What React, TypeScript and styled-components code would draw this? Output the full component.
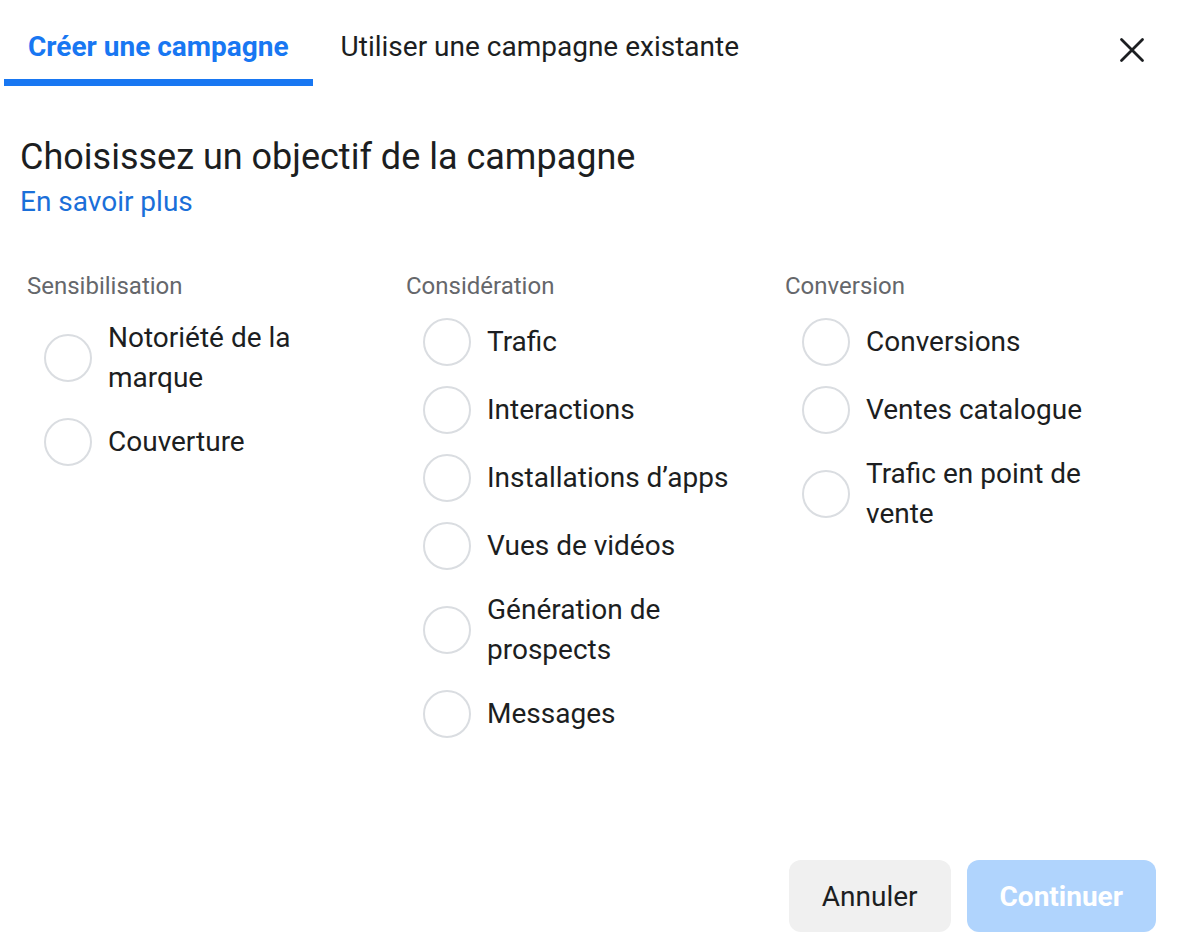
import React from "react";
import styled, { createGlobalStyle } from "styled-components";

const GlobalStyle = createGlobalStyle`
  html, body { margin: 0; padding: 0; background: #fff; }
  body { font-family: Roboto, "Liberation Sans", Arial, sans-serif; color: #1c1e21; -webkit-font-smoothing: antialiased; }
  * { box-sizing: border-box; }
`;

const Dialog = styled.div`
  width: 1182px;
  height: 952px;
  display: flex;
  flex-direction: column;
  background: #fff;
`;

const TabBar = styled.div`
  display: flex;
  align-items: stretch;
  height: 86px;
  padding: 0 30px 0 4px;
  gap: 4px;
`;

const Tab = styled.button<{ $active?: boolean }>`
  appearance: none;
  border: none;
  background: none;
  margin: 0;
  padding: 6px 24px 0;
  font-family: Roboto, "Liberation Sans", Arial, sans-serif;
  font-size: 28px;
  font-weight: ${(p) => (p.$active ? 700 : 400)};
  color: ${(p) => (p.$active ? "#1877f2" : "#1c1e21")};
  box-shadow: ${(p) => (p.$active ? "inset 0 -7px 0 #1877f2" : "none")};
  display: flex;
  align-items: center;
  cursor: pointer;
`;

const Spacer = styled.div`
  flex: 1;
`;

const CloseButton = styled.button`
  appearance: none;
  border: none;
  background: none;
  padding: 0;
  width: 40px;
  height: 40px;
  margin-top: 30px;
  display: flex;
  align-items: center;
  justify-content: center;
  cursor: pointer;
`;

const Body = styled.div`
  flex: 1;
  padding: 46px 20px 0;
  display: flex;
  flex-direction: column;
`;

const Heading = styled.h2`
  margin: 0;
  font-size: 36px;
  font-weight: 400;
  line-height: 50px;
  color: #1c1e21;
`;

const Link = styled.a`
  font-size: 28px;
  line-height: 40px;
  color: #1a6fd9;
  text-decoration: none;
  align-self: flex-start;
  cursor: pointer;
`;

const Columns = styled.div`
  display: grid;
  grid-template-columns: repeat(3, 379px);
  padding-left: 7px;
  margin-top: 50px;
`;

const Column = styled.div`
  display: flex;
  flex-direction: column;
`;

const GroupLabel = styled.div`
  font-size: 24px;
  line-height: 28px;
  color: #65676b;
  margin-bottom: 18px;
`;

const OptionList = styled.div`
  display: flex;
  flex-direction: column;
  gap: 20px;
  padding-left: 17px;
`;

const Option = styled.label`
  display: flex;
  align-items: center;
  gap: 16px;
  cursor: pointer;
`;

const Radio = styled.span`
  width: 48px;
  height: 48px;
  flex: 0 0 48px;
  border-radius: 50%;
  border: 2px solid #dadde1;
  background: #fff;
`;

const OptionText = styled.span`
  font-size: 28px;
  line-height: 40px;
  color: #1c1e21;
  max-width: 262px;
`;

const Footer = styled.div`
  display: flex;
  justify-content: flex-end;
  gap: 16px;
  padding: 0 26px 20px;
`;

const Button = styled.button<{ $primary?: boolean }>`
  appearance: none;
  border: none;
  height: 72px;
  padding: 0 33px;
  border-radius: 12px;
  font-family: Roboto, "Liberation Sans", Arial, sans-serif;
  font-size: 28px;
  font-weight: ${(p) => (p.$primary ? 700 : 400)};
  background: ${(p) => (p.$primary ? "#b0d4fd" : "#f0f0f0")};
  color: ${(p) => (p.$primary ? "#ffffff" : "#1c1e21")};
  cursor: pointer;
`;

const groups = [
  { label: "Sensibilisation", options: ["Notoriété de la marque", "Couverture"] },
  {
    label: "Considération",
    options: [
      "Trafic",
      "Interactions",
      "Installations d’apps",
      "Vues de vidéos",
      "Génération de prospects",
      "Messages",
    ],
  },
  { label: "Conversion", options: ["Conversions", "Ventes catalogue", "Trafic en point de vente"] },
];

export default function App() {
  return (
    <>
      <GlobalStyle />
      <Dialog>
        <TabBar>
          <Tab $active>Créer une campagne</Tab>
          <Tab>Utiliser une campagne existante</Tab>
          <Spacer />
          <CloseButton aria-label="Fermer">
            <svg width="26" height="26" viewBox="0 0 26 26">
              <path d="M2.5 2.5 L23.5 23.5 M23.5 2.5 L2.5 23.5" stroke="#1c1e21" strokeWidth="2.8" strokeLinecap="round" />
            </svg>
          </CloseButton>
        </TabBar>
        <Body>
          <Heading>Choisissez un objectif de la campagne</Heading>
          <Link>En savoir plus</Link>
          <Columns>
            {groups.map((g) => (
              <Column key={g.label}>
                <GroupLabel>{g.label}</GroupLabel>
                <OptionList>
                  {g.options.map((o) => (
                    <Option key={o}>
                      <Radio />
                      <OptionText>{o}</OptionText>
                    </Option>
                  ))}
                </OptionList>
              </Column>
            ))}
          </Columns>
        </Body>
        <Footer>
          <Button>Annuler</Button>
          <Button $primary>Continuer</Button>
        </Footer>
      </Dialog>
    </>
  );
}
